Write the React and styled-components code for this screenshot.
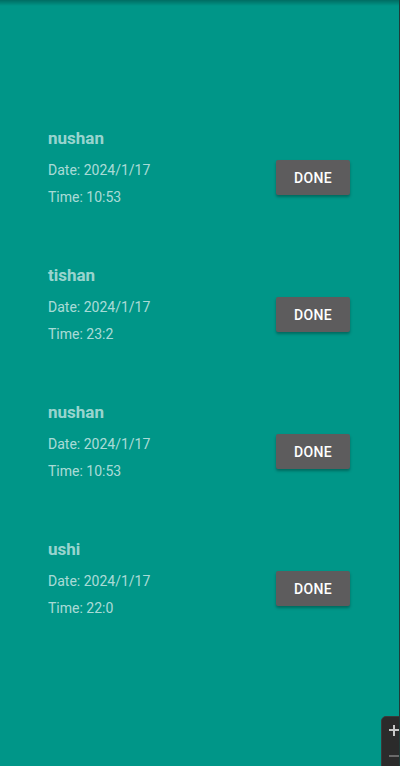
import React from "react";
import styled, { createGlobalStyle } from "styled-components";

const Global = createGlobalStyle`
  html, body { margin: 0; padding: 0; }
  body {
    background: #009688;
    font-family: Roboto, "Noto Sans", sans-serif;
    overflow: hidden;
  }
`;

const Screen = styled.div`
  position: relative;
  width: 400px;
  height: 766px;
  background: #009688;
  box-sizing: border-box;
  padding-top: 127px;
  border-right: 1px solid #1f3b38;
  overflow: hidden;
`;

const TopShade = styled.div`
  position: absolute;
  top: 0;
  left: 0;
  right: 0;
  height: 6px;
  background: linear-gradient(to bottom, rgba(0,0,0,0.28), rgba(0,0,0,0));
`;

const Card = styled.div`
  display: flex;
  align-items: flex-start;
  justify-content: space-between;
  height: 137px;
  padding: 0 49px 0 48px;
  box-sizing: border-box;
`;

const Info = styled.div`
  display: flex;
  flex-direction: column;
  padding-top: 1px;
`;

const Name = styled.div`
  font-size: 17px;
  font-weight: 700;
  line-height: 20px;
  color: rgba(255, 255, 255, 0.62);
  margin-bottom: 9px;
`;

const Line = styled.div`
  font-size: 14px;
  line-height: 27px;
  color: rgba(255, 255, 255, 0.68);
`;

const DoneButton = styled.button`
  margin-top: 33px;
  width: 74px;
  height: 35px;
  border: none;
  border-radius: 2px;
  background: #5d5c5d;
  color: #ffffff;
  font-family: Roboto, sans-serif;
  font-size: 14px;
  font-weight: 500;
  letter-spacing: 0.3px;
  text-transform: uppercase;
  box-shadow: 0 2px 3px rgba(0, 0, 0, 0.3);
  padding: 0;
`;

const ZoomPanel = styled.div`
  position: absolute;
  left: 381px;
  top: 716px;
  width: 30px;
  height: 60px;
  background: #2b2b2b;
  border-radius: 5px 0 0 0;
  border: 1px solid #3a3a3a;
  box-sizing: border-box;
`;

const ZoomSign = styled.div`
  position: absolute;
  left: ${(p) => p.$x}px;
  top: ${(p) => p.$y}px;
  width: 11px;
  height: 11px;
  &::before, &::after {
    content: "";
    position: absolute;
    background: #c8c8c8;
  }
  &::before {
    left: 0; right: 0; top: 4px; height: 2px;
    background: ${(p) => (p.$minus ? "#6a6a6a" : "#c8c8c8")};
  }
  &::after {
    display: ${(p) => (p.$minus ? "none" : "block")};
    top: 0; bottom: 0; left: 4px; width: 2px;
  }
`;

const items = [
  { name: "nushan", date: "2024/1/17", time: "10:53" },
  { name: "tishan", date: "2024/1/17", time: "23:2" },
  { name: "nushan", date: "2024/1/17", time: "10:53" },
  { name: "ushi", date: "2024/1/17", time: "22:0" },
];

export default function App() {
  return (
    <>
      <Global />
      <Screen>
        <TopShade />
        {items.map((it, i) => (
          <Card key={i}>
            <Info>
              <Name>{it.name}</Name>
              <Line>Date: {it.date}</Line>
              <Line>Time: {it.time}</Line>
            </Info>
            <DoneButton>Done</DoneButton>
          </Card>
        ))}
        <ZoomPanel>
          <ZoomSign $x={7} $y={8} />
          <ZoomSign $x={7} $y={34} $minus />
        </ZoomPanel>
      </Screen>
    </>
  );
}
